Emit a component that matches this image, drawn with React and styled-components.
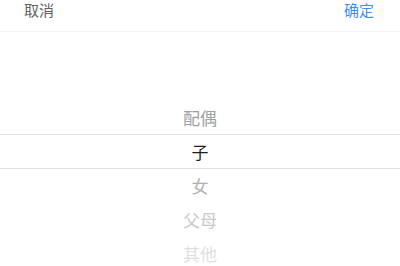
import React from 'react';
import styled, {createGlobalStyle} from 'styled-components';

const GlobalStyle = createGlobalStyle`
  html, body {
    margin: 0;
    padding: 0;
    background: #fff;
  }
  body {
    font-family: "Noto Sans CJK SC", "Noto Sans", sans-serif;
  }
`;

const Sheet = styled.div`
  width: 400px;
  height: 266px;
  overflow: hidden;
  background: #fff;
`;

const Toolbar = styled.div`
  display: flex;
  justify-content: space-between;
  align-items: flex-start;
  height: 31px;
  padding: 0 26px 0 24px;
  border-bottom: 1px solid #f4f4f4;
`;

const ToolButton = styled.span`
  font-size: 15px;
  line-height: 19px;
  color: ${props => (props.primary ? '#3f8cf6' : '#5f5f5f')};
  cursor: pointer;
`;

const Column = styled.div`
  position: relative;
  display: flex;
  flex-direction: column;
`;

const Item = styled.div`
  height: 34px;
  display: flex;
  align-items: center;
  justify-content: center;
  font-size: 17px;
  color: ${props => props.color};
`;

const SelectedBand = styled.div`
  position: absolute;
  left: 0;
  right: 0;
  top: 102px;
  height: 35px;
  border-top: 1px solid #e2e2e2;
  border-bottom: 1px solid #e2e2e2;
  box-sizing: border-box;
  pointer-events: none;
`;

const items = [
  {label: '', color: '#999'},
  {label: '', color: '#999'},
  {label: '配偶', color: '#a0a0a0'},
  {label: '子', color: '#1e1e1e'},
  {label: '女', color: '#b0b0b0'},
  {label: '父母', color: '#c9c9c9'},
  {label: '其他', color: '#dfdfdf'},
];

function App() {
  return (
    <>
      <GlobalStyle />
      <Sheet>
        <Toolbar>
          <ToolButton>取消</ToolButton>
          <ToolButton primary>确定</ToolButton>
        </Toolbar>
        <Column>
          {items.map((item, i) => (
            <Item key={i} color={item.color}>{item.label}</Item>
          ))}
          <SelectedBand />
        </Column>
      </Sheet>
    </>
  );
}

export default App;
